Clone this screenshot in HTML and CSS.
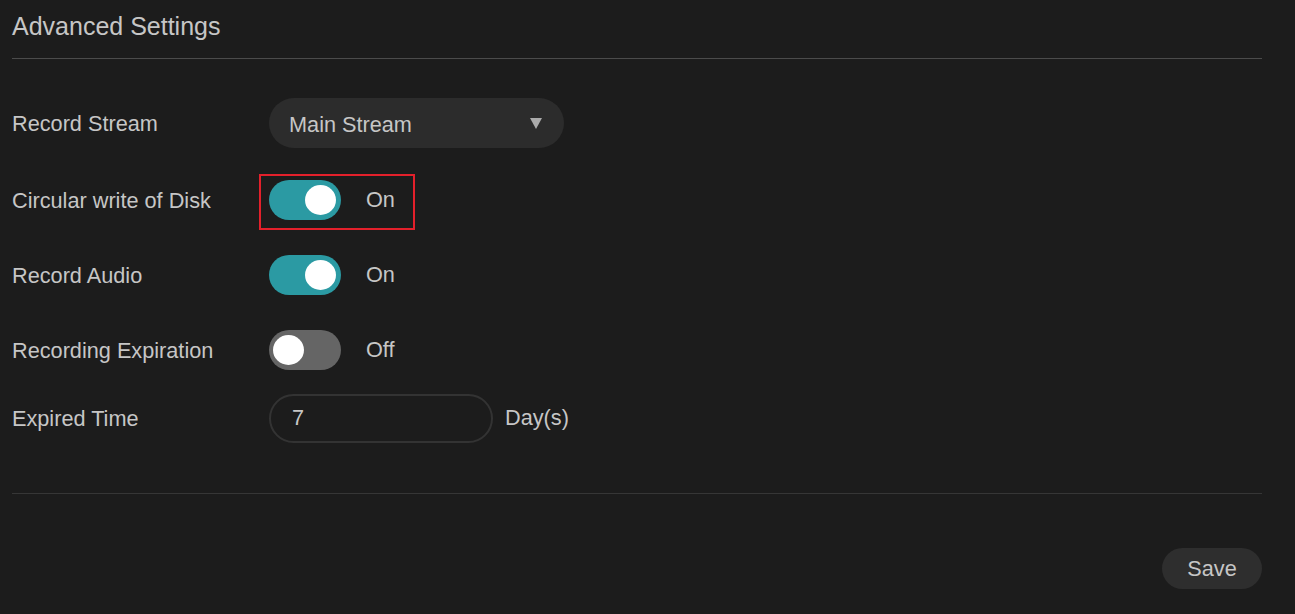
FILE: index.html
```html
<!DOCTYPE html>
<html lang="en">
<head>
<meta charset="utf-8">
<title>Advanced Settings</title>
<link rel="stylesheet" href="styles.css">
</head>
<body>
<div class="panel">
  <div class="header">
    <h1 class="title">Advanced Settings</h1>
  </div>
  <div class="form">
    <div class="row row-select">
      <div class="label">Record Stream</div>
      <div class="control">
        <div class="select">
          <span class="select-text">Main Stream</span>
          <span class="caret"></span>
        </div>
      </div>
    </div>
    <div class="row">
      <div class="label">Circular write of Disk</div>
      <div class="control">
        <div class="toggle on"><span class="knob"></span></div>
        <span class="state">On</span>
        <div class="highlight"></div>
      </div>
    </div>
    <div class="row">
      <div class="label">Record Audio</div>
      <div class="control">
        <div class="toggle on"><span class="knob"></span></div>
        <span class="state">On</span>
      </div>
    </div>
    <div class="row">
      <div class="label">Recording Expiration</div>
      <div class="control">
        <div class="toggle off"><span class="knob"></span></div>
        <span class="state">Off</span>
      </div>
    </div>
    <div class="row row-input">
      <div class="label">Expired Time</div>
      <div class="control">
        <div class="num-input">7</div>
        <span class="unit">Day(s)</span>
      </div>
    </div>
  </div>
  <div class="footer">
    <button class="save">Save</button>
  </div>
</div>
</body>
</html>
```
FILE: styles.css
```css
* { box-sizing: border-box; }

html, body {
  margin: 0;
  padding: 0;
  background: #1c1c1c;
  height: 100%;
}

body {
  font-family: "Liberation Sans", Arial, sans-serif;
  color: #c6c6c6;
}

.panel {
  padding: 0 33px 0 12px;
}

.header {
  height: 59px;
  padding-top: 12px;
  border-bottom: 1px solid #4b4b4b;
}

.title {
  margin: 0;
  font-size: 25px;
  font-weight: normal;
  line-height: 29px;
  color: #c6c6c6;
}

.form {
  display: flex;
  flex-direction: column;
  gap: 25px;
  padding-top: 39px;
  padding-bottom: 50px;
  border-bottom: 1px solid #363636;
}

.row {
  display: flex;
  align-items: center;
  height: 50px;
  font-size: 21.7px;
}

.row-select { margin-bottom: 2px; }
.row-input { margin-top: -7px; }

.label {
  width: 257px;
  flex: none;
  padding-top: 1px;
}

.control {
  position: relative;
  display: flex;
  align-items: center;
  height: 100%;
}

.select {
  width: 295px;
  height: 50px;
  border-radius: 25px;
  background: #2c2c2c;
  display: flex;
  align-items: center;
  justify-content: space-between;
  padding: 0 22px 0 20px;
}

.select-text {
  padding-top: 3px;
}

.caret {
  width: 0;
  height: 0;
  border-left: 6px solid transparent;
  border-right: 6px solid transparent;
  border-top: 11px solid #ababab;
}

.toggle {
  position: relative;
  width: 72px;
  height: 40px;
  border-radius: 20px;
  flex: none;
}

.toggle.on { background: #2b9aa3; }
.toggle.off { background: #656565; }

.knob {
  position: absolute;
  top: 5px;
  width: 31px;
  height: 30px;
  border-radius: 50%;
  background: #ffffff;
}

.toggle.on .knob { right: 5px; }
.toggle.off .knob { left: 4px; }

.state {
  margin-left: 25px;
}

.highlight {
  position: absolute;
  left: -10px;
  top: -1px;
  width: 156px;
  height: 56px;
  border: 2px solid #e3202b;
  pointer-events: none;
}

.num-input {
  width: 224px;
  height: 49px;
  border: 2px solid #333333;
  border-radius: 25px;
  padding-left: 21px;
  display: flex;
  align-items: center;
}

.unit {
  margin-left: 12px;
}

.footer {
  display: flex;
  justify-content: flex-end;
  padding-top: 54px;
}

.save {
  width: 100px;
  height: 41px;
  border: none;
  border-radius: 21px;
  background: #2e2e2e;
  color: #c6c6c6;
  font-family: "Liberation Sans", Arial, sans-serif;
  font-size: 21.7px;
  padding: 0;
}
```
